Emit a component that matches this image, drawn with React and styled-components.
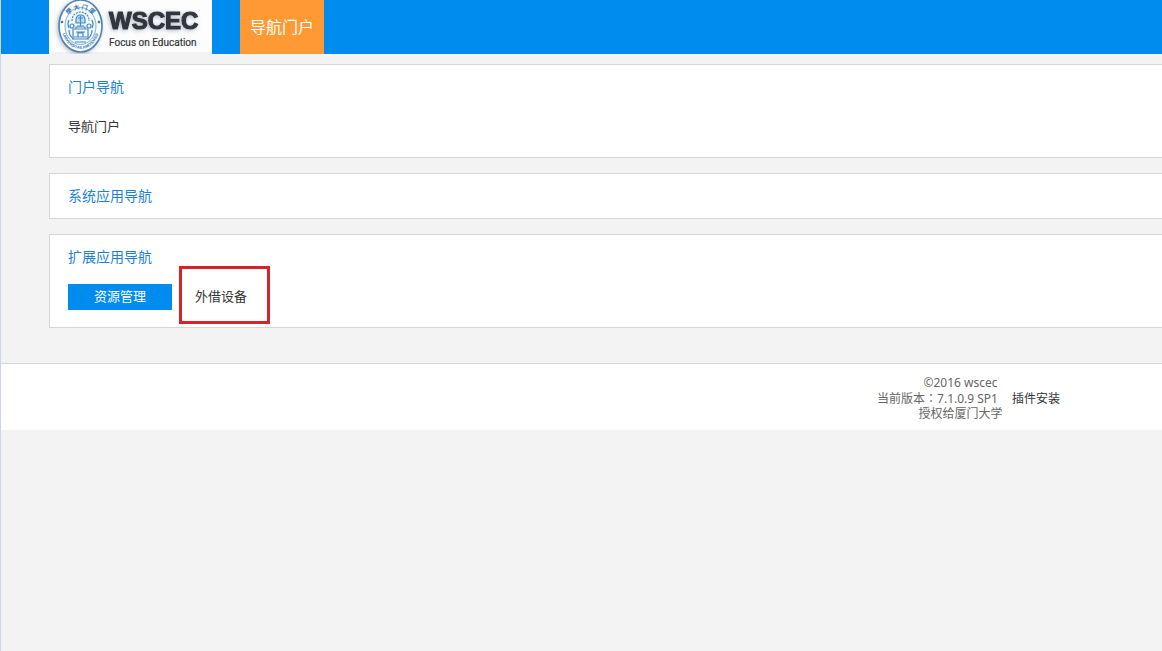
import React from 'react';
import styled, { createGlobalStyle } from 'styled-components';

const GlobalStyle = createGlobalStyle`
  body {
    margin: 0;
    background-color: #f3f3f3;
    font-family: "Noto Sans", "Noto Sans CJK SC", sans-serif;
    font-size: 13px;
    color: #333;
  }
`;
const Page = styled.div`
  min-height: 100vh;
  box-sizing: border-box;
  border-left: 1px solid #ccd6e2;
`;
const Header = styled.header`
  display: flex;
  height: 54px;
  padding-left: 48px;
  background-color: #008cee;
`;
const LogoLink = styled.a`
  display: block;
  width: 163px;
  height: 54px;
  margin-right: 28px;
  background-color: #fdfdfe;

  svg {
    display: block;
  }
`;
const Nav = styled.nav`
  display: flex;
`;
const NavLink = styled.a`
  padding: 0 10px;
  background-color: #ff9934;
  color: #fff;
  font-size: 16px;
  line-height: 54px;
  text-decoration: none;
`;
const Main = styled.main`
  display: flex;
  flex-direction: column;
  gap: 15px;
  padding: 10px 0 35px 48px;
`;
const Panel = styled.section`
  padding: 12px 18px;
  border: 1px solid #d5d6d8;
  border-right: none;
  background-color: #fff;
`;
const PanelTitle = styled.h2`
  margin: 0;
  color: #1e82d2;
  font-size: 14px;
  font-weight: 400;
  line-height: 20px;
`;
const LinkRow = styled.div`
  display: flex;
  align-items: flex-start;
  height: 26px;
  margin: 17px 0 5px;
  gap: 7px;
`;
const PlainLink = styled.a`
  color: #333;
  line-height: 24px;
  text-decoration: none;
`;
const ActiveLink = styled.a`
  width: 104px;
  height: 26px;
  background-color: #008cee;
  color: #fff;
  line-height: 24px;
  text-align: center;
  text-decoration: none;
`;
const MarkedLink = styled.a`
  box-sizing: border-box;
  width: 91px;
  height: 58px;
  flex: none;
  margin-top: -18px;
  padding-left: 13px;
  border: 3px solid #d9232b;
  color: #333;
  line-height: 54px;
  text-decoration: none;
`;
const Footer = styled.footer`
  display: flex;
  justify-content: flex-end;
  padding: 11px 102px 9px 0;
  border-top: 1px solid #d5d6d8;
  background-color: #fff;
  color: #666;
  font-size: 12px;
  line-height: 15px;
`;
const FooterText = styled.div`
  display: flex;
  flex-direction: column;
  align-items: center;
`;
const Copyright = styled.div`
  height: 16px;
`;
const VersionLine = styled.div`
  display: flex;
  gap: 14px;
  padding-left: 16px;
`;
const Colon = styled.span`
  font-family: "Noto Sans CJK TC", sans-serif;
  line-height: 1;
`;
const FooterLink = styled.a`
  color: #333;
  text-decoration: none;
`;

const Logo = () => (
  <svg width="163" height="54" viewBox="0 0 163 54" role="img" aria-label="WSCEC Focus on Education">
    <defs>
      <path id="rimTop" d="M15 27 A16.5 18 0 0 1 48 27" />
      <path id="rimBottom" d="M12 24 A19.5 25 0 0 0 51 24" />
      <filter id="shade" x="-20%" y="-20%" width="140%" height="150%">
        <feDropShadow dx="-1" dy="1" stdDeviation="2" floodColor="#7d8894" floodOpacity="0.6" />
      </filter>
    </defs>
    <rect y="52" width="163" height="2" fill="#edf3f7" />
    <ellipse cx="31.5" cy="26" rx="21.5" ry="26" fill="#fbfdfe" stroke="#4f82b8" strokeWidth="1.6" filter="url(#shade)" />
    <ellipse cx="31.5" cy="26" rx="15.5" ry="18.5" fill="#f1f8fc" stroke="#7fb0dc" strokeWidth="1" />
    <g fill="#3c74b2">
      <text fontSize="6" fontWeight="700" fontFamily="'Noto Sans CJK SC', sans-serif" textAnchor="middle">
        <textPath href="#rimTop" startOffset="50%">學 大 门 厦</textPath>
      </text>
      <text fontSize="4" fontWeight="700" fontFamily="'Liberation Sans', sans-serif" textAnchor="middle">
        <textPath href="#rimBottom" startOffset="50%">UNIVERSITAS AMOIENSIS</textPath>
      </text>
      <circle cx="13" cy="22" r="1.3" />
      <circle cx="50" cy="22" r="1.3" />
    </g>
    <g fill="none" stroke="#4b8ac8" strokeWidth="1.2">
      <path d="M23 21 q0 -8 8.5 -9 q8.5 1 8.5 9" strokeDasharray="2 1" />
      <path d="M27 20 q0 -5 4.5 -5 q4.5 0 4.5 5 v3 h-9 z" fill="#b9d7ef" />
      <path d="M29 18 h5 M31.5 16 v10 M28 26 h7" />
      <path d="M20 20 q-2 4 0 8 M43 20 q2 4 0 8" />
      <circle cx="23" cy="26" r="2" />
      <circle cx="40" cy="26" r="2" />
      <path d="M20 30 q0 6 5 9 M43 30 q0 6 -5 9" />
      <path d="M24 29 h15 v8 h-15 z M27 29 v-2 h9 v2 M29 37 v-4 h5 v4 M27 32 h9" />
      <path d="M23 39 h17 M26 42 h11" />
    </g>
    <g fill="#33363c" filter="url(#shade)">
      <text x="60" y="29" fontSize="24" fontWeight="700" fontFamily="'Liberation Sans', sans-serif" stroke="#33363c" strokeWidth="1.2">WSCEC</text>
    </g>
    <text x="60" y="46" fontSize="10" fontFamily="Roboto, sans-serif" fill="#33363c" stroke="#33363c" strokeWidth="0.2">Focus on Education</text>
  </svg>
);

const App = () => (
  <>
    <GlobalStyle />
    <Page>
      <Header>
        <LogoLink href="#home"><Logo /></LogoLink>
        <Nav>
          <NavLink href="#portal">导航门户</NavLink>
        </Nav>
      </Header>

      <Main>
        <Panel>
          <PanelTitle>门户导航</PanelTitle>
          <LinkRow>
            <PlainLink href="#portal">导航门户</PlainLink>
          </LinkRow>
        </Panel>
        <Panel>
          <PanelTitle>系统应用导航</PanelTitle>
        </Panel>
        <Panel>
          <PanelTitle>扩展应用导航</PanelTitle>
          <LinkRow>
            <ActiveLink href="#resources">资源管理</ActiveLink>
            <MarkedLink href="#devices">外借设备</MarkedLink>
          </LinkRow>
        </Panel>
      </Main>

      <Footer>
        <FooterText>
          <Copyright>©2016 wscec</Copyright>
          <VersionLine>
            <span>当前版本<Colon>：</Colon>7.1.0.9 SP1</span>
            <FooterLink href="#plugins">插件安装</FooterLink>
          </VersionLine>
          <div>授权给厦门大学</div>
        </FooterText>
      </Footer>
    </Page>
  </>
);

export default App;
